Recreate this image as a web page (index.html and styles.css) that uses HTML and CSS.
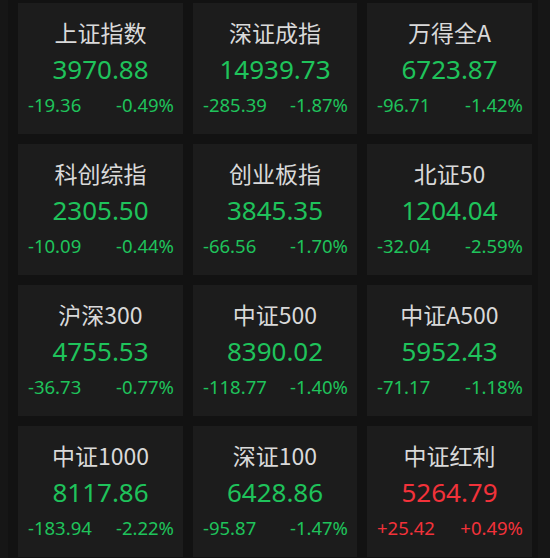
FILE: index.html
```html
<!DOCTYPE html>
<html lang="zh">
<head>
<meta charset="utf-8">
<link rel="stylesheet" href="styles.css">
</head>
<body>
<div class="grid">
  <div class="card"><div class="name">上证指数</div><div class="price down">3970.88</div><div class="chg down"><span>-19.36</span><span>-0.49%</span></div></div>
  <div class="card"><div class="name">深证成指</div><div class="price down">14939.73</div><div class="chg down"><span>-285.39</span><span>-1.87%</span></div></div>
  <div class="card"><div class="name">万得全A</div><div class="price down">6723.87</div><div class="chg down"><span>-96.71</span><span>-1.42%</span></div></div>
  <div class="card"><div class="name">科创综指</div><div class="price down">2305.50</div><div class="chg down"><span>-10.09</span><span>-0.44%</span></div></div>
  <div class="card"><div class="name">创业板指</div><div class="price down">3845.35</div><div class="chg down"><span>-66.56</span><span>-1.70%</span></div></div>
  <div class="card"><div class="name">北证50</div><div class="price down">1204.04</div><div class="chg down"><span>-32.04</span><span>-2.59%</span></div></div>
  <div class="card"><div class="name">沪深300</div><div class="price down">4755.53</div><div class="chg down"><span>-36.73</span><span>-0.77%</span></div></div>
  <div class="card"><div class="name">中证500</div><div class="price down">8390.02</div><div class="chg down"><span>-118.77</span><span>-1.40%</span></div></div>
  <div class="card"><div class="name">中证A500</div><div class="price down">5952.43</div><div class="chg down"><span>-71.17</span><span>-1.18%</span></div></div>
  <div class="card"><div class="name">中证1000</div><div class="price down">8117.86</div><div class="chg down"><span>-183.94</span><span>-2.22%</span></div></div>
  <div class="card"><div class="name">深证100</div><div class="price down">6428.86</div><div class="chg down"><span>-95.87</span><span>-1.47%</span></div></div>
  <div class="card"><div class="name">中证红利</div><div class="price up">5264.79</div><div class="chg up"><span>+25.42</span><span>+0.49%</span></div></div>
</div>
</body>
</html>
```

FILE: styles.css
```css
html, body {
  margin: 0;
  padding: 0;
  background: #161616;
  height: 100%;
  overflow: hidden;
}
body {
  padding: 0 12px 0 8px;
}
.grid {
  background: #121212;
  padding: 3px 6px 0 10px;
  display: grid;
  grid-template-columns: 165px 164px 165px;
  grid-auto-rows: 131px;
  column-gap: 10px;
  row-gap: 10px;
  height: 100%;
  box-sizing: border-box;
}
.card {
  background: #1c1c1c;
  padding-top: 14px;
  box-sizing: border-box;
  display: flex;
  flex-direction: column;
  align-items: center;
}
.name {
  font-family: "Noto Sans CJK SC", "Noto Sans", sans-serif;
  font-weight: 400;
  font-size: 23px;
  line-height: 31px;
  color: #d9d9d9;
}
.price {
  font-family: "Noto Sans", "Noto Sans CJK SC", sans-serif;
  font-weight: 400;
  font-size: 26px;
  line-height: 42px;
}
.chg {
  align-self: stretch;
  display: flex;
  justify-content: space-between;
  padding: 3px 9px 0 10px;
  font-family: "Noto Sans", sans-serif;
  font-weight: 400;
  font-size: 18.5px;
  line-height: 24px;
}
.down { color: #1fc35b; }
.up { color: #f2323a; }
```
